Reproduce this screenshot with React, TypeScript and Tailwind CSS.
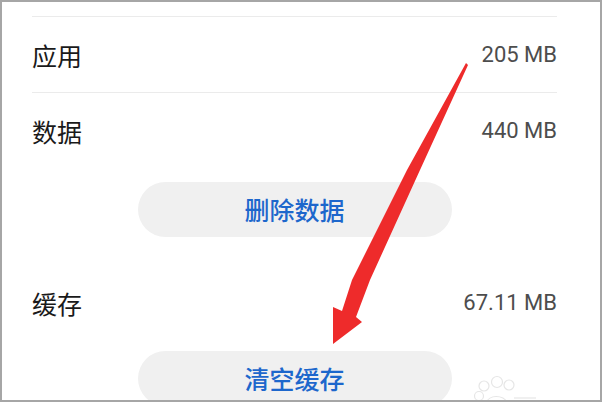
import React from 'react';

const cjk = { fontFamily: '"Noto Sans CJK SC", "Noto Sans", sans-serif' };
const num = { fontFamily: 'Roboto, "Liberation Sans", sans-serif' };

function Row({ label, value }: { label: string; value: string }) {
  return (
    <div className="flex h-[75px] items-center justify-between">
      <span className="pt-[2px] text-[25px] leading-none text-[#1a1a1a]" style={cjk}>
        {label}
      </span>
      <span className="text-[22px] leading-none text-[#4d4d4d]" style={num}>
        {value}
      </span>
    </div>
  );
}

function PillButton({ text, className = '' }: { text: string; className?: string }) {
  return (
    <button
      className={`mx-auto flex h-[55px] w-[314px] shrink-0 items-center justify-center rounded-full bg-[#f0f0f0] text-[25px] font-medium leading-none text-[#1d67cc] ${className}`}
      style={cjk}
    >
      {text}
    </button>
  );
}

export default function App() {
  return (
    <div className="relative h-[402px] w-[602px] overflow-hidden bg-white">
      {/* settings list */}
      <div className="flex w-[557px] flex-col pl-[32px] pt-[16px]">
        <div className="h-px bg-[#ebebeb]" />
        <Row label="应用" value="205 MB" />
        <div className="h-px bg-[#ebebeb]" />
        <Row label="数据" value="440 MB" />
        <PillButton text="删除数据" className="mt-[14px]" />
        <div className="mt-[28px]">
          <Row label="缓存" value="67.11 MB" />
        </div>
        <PillButton text="清空缓存" className="mt-[11px]" />
      </div>

      {/* watermark */}
      <svg
        className="pointer-events-none absolute left-[470px] top-[374px]"
        width="70"
        height="30"
        viewBox="0 0 70 30"
        fill="none"
        stroke="#e6e6e6"
        strokeWidth="1.2"
      >
        <circle cx="14" cy="12" r="5" />
        <circle cx="27" cy="8" r="5.5" />
        <circle cx="39" cy="11" r="5" />
        <circle cx="9" cy="22" r="4.5" />
        <path d="M16 30 C18 20 34 20 38 30" />
        <path d="M44 24 H66" />
      </svg>

      {/* red annotation arrow */}
      <svg
        className="pointer-events-none absolute inset-0"
        width="602"
        height="402"
        viewBox="0 0 602 402"
      >
        <path
          d="M466 63 L468 65 L420 170 L370 280 L356 317 L362 322 L333 344 L333 307 L342 311 L352 280 L407 170 Z"
          fill="#ee2b2b"
        />
      </svg>

      {/* frame */}
      <div className="pointer-events-none absolute inset-0 border-2 border-[#a6a6a6]" />
    </div>
  );
}
